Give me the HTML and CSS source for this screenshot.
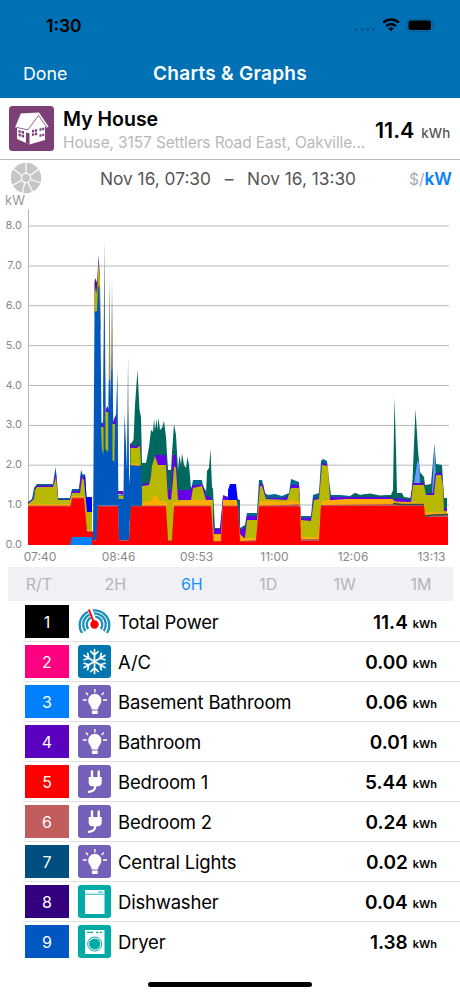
FILE: index.html
```html
<!DOCTYPE html>
<html lang="en">
<head>
<meta charset="UTF-8">
<meta name="viewport" content="width=device-width, initial-scale=1.0">
<title>Charts &amp; Graphs</title>
<link rel="stylesheet" href="styles.css">
</head>
<body>
<svg class="defs" width="0" height="0">
    <symbol id="bulb" viewBox="0 0 33 33">
        <path d="M10.200 15.400a6.600 6.600 0 1 1 13.200 0c0 3.800-3.200 5-3.400 9h-6.400c-.2-4-3.400-5.200-3.400-9z" fill="#fff"/>
        <rect x="13.800" y="25.500" width="6" height="3.500" rx="1.200" fill="#fff"/>
        <path d="M16.800 4v3.500M8 7.500l2 2.600M25.700 7.500l-2 2.600M4.800 15h4M25 15h4" stroke="#fff" stroke-width="1.400"/>
    </symbol>
    <symbol id="plug" viewBox="0 0 33 33">
        <path d="M14 6.500v8M20.700 6.500v8" stroke="#fff" stroke-width="2.400" stroke-linecap="round"/>
        <path d="M10.700 12h13v5.500q0 3.700-3.700 3.700h-5.600q-3.700 0-3.700-3.700z" fill="#fff"/>
        <path d="M17.200 20v1.500q-.3 4.800-6.400 5.300" fill="none" stroke="#fff" stroke-width="2.300" stroke-linecap="round"/>
    </symbol>
</svg>

<header class="top">
    <div class="status">
        <span class="clock">1:30</span>
        <svg width="84" height="18" viewBox="0 0 84 18">
            <g fill="#00558f">
                <circle cx="4" cy="12.500" r="1.400"/><circle cx="10" cy="12.500" r="1.400"/>
                <circle cx="15.700" cy="12.500" r="1.400"/><circle cx="21.500" cy="12.500" r="1.400"/>
            </g>
            <g fill="none" stroke="#000" stroke-width="2.400">
                <path d="M31.200 5.600a11.300 11.300 0 0 1 15.600 0"/>
                <path d="M34.200 9.100a6.800 6.800 0 0 1 9.600 0"/>
            </g>
            <path d="M36.300 11.300q2.700-2.200 5.400 0L39 14.200z"/>
            <rect x="55" y="2" width="25.500" height="12.500" rx="3.500" fill="none" stroke="#005d96"/>
            <rect x="56.500" y="3.500" width="22.500" height="9.500" rx="2.200"/>
            <path d="M82 6q2 2 0 4z" fill="#004d80"/>
        </svg>
    </div>
    <div class="nav">
        <span class="done">Done</span>
        <h1>Charts &amp; Graphs</h1>
    </div>
</header>

<section class="house">
    <svg width="45" height="45" viewBox="0 0 45 45">
        <rect width="45" height="45" rx="3.500" fill="#7d3f76"/>
        <path d="M6 21.500L11.800 7.500 30 6.500 39.500 20.500 37.800 22.300 36 20v14L20.500 38.500 8 33V21.500z" fill="#fff"/>
        <path d="M38.500 22L29.500 9.500 19 23.800 8 21.500" fill="none" stroke="#7d3f76" stroke-width=".8"/>
        <g fill="#7d3f76">
            <path d="M9.500 24l2.300.5v2.600l-2.300-.6zM12.600 24.700l2.400.5v2.700l-2.400-.6zM9.500 27.500l2.300.6v2.600l-2.300-.8zM12.600 28.300l2.400.7v2.700l-2.400-.9z"/>
            <path d="M17 26.500l3.500.8v11.300L17 37z"/>
            <path d="M23 24l2.200-.4V26l-2.200.4zM26 23.400l2.200-.4v2.500l-2.200.4zM23 27.400l2.200-.4v2.500l-2.200.5zM26 26.800l2.200-.4v2.500l-2.200.5z"/>
            <path d="M30.500 22.500l2-.4v2.400l-2 .4zM33.200 22l2-.4V24l-2 .4zM30.500 28.500l2-.5v2.400l-2 .5zM33.200 27.900l2-.5v2.400l-2 .5z"/>
        </g>
    </svg>
    <div class="house-text">
        <h2>My House</h2>
        <p>House, 3157 Settlers Road East, Oakville...</p>
    </div>
    <div class="house-total"><b>11.4</b><span>kWh</span></div>
</section>

<section class="range">
    <svg width="32" height="32" viewBox="0 0 32 32">
        <circle cx="16" cy="16" r="15.200" fill="#c6c6c6"/>
        <g stroke="#fff" stroke-width="1.200" fill="none">
            <circle cx="16" cy="16" r="4.600"/>
            <path d="M16 11.400V0M19.900 13.500L29 7M20.500 17.500L31 21M18 20.200L23 30.500M14.700 20.400L12.500 31M12 18.300L2 23.500M12 13.700L3.500 7"/>
        </g>
    </svg>
    <div class="dates"><span>Nov 16, 07:30</span><span class="dash">–</span><span>Nov 16, 13:30</span></div>
    <div class="unit">$/<b>kW</b></div>
</section>

<div class="kw">kW</div>
<svg class="chart" width="460" height="359" viewBox="0 208 460 359">
    <g class="grid">
        <path d="M28 226H449M28 266H449M28 305.700H449M28 345.600H449M28 385.500H449M28 425.400H449M28 465.200H449M28 505H449M28.500 209V545"/>
    </g>

    <!-- top of the stack -->
    <path fill="#00695f" d="M130 545V445L133.500 440 135 405 137.500 370 139.500 410 141 417 142 463H146L149 447 151 430 153 432 154 419 155 430 156.500 419 157.300 430 158.500 418 160 430 162 428 164 421 166 437 168 470H171L172 453 174 424 176 435 178 470 179.500 455 181 465 182 453 184 465 186 468 187.500 457 189 465 191 488 206 494 207 471 209 468 210.500 449 212 487 213 489 215 530V545z"/>
    <path fill="#00658f" d="M28 545V502L32 499 34 488 37 484H53L55.500 467 57 481 58 498H70L72 489H79L81 470 83 475 85 474 86.500 497H92V545zM189 545L191 490 193 480 202 480 203 486 206 491 208 496H211L214 528H220L222 510 223 495 228 497 240 500V528L245 525 247 513H257L259 480H262L265 493 268 495 275 494 282 496 289 493 291 479 299 482 300 516H311L313 495 319 493 321 461 323 459 327 461 329 480 331 495H340L350 496 355 493 360 495 368 494 380 496 392 495V545z"/>
    <path fill="#00695f" d="M350 497L355 493 360 495 370 493.500 380 495.500 391 495 393 490 394.500 397 396 450 397 493 402 493 404 497 411 498 412.500 480 415.500 409 418 450 420 472 424 477 425 485 431 484 434.500 444 436 464 442 465 444 498H447V545H350z"/>
    <path fill="#669cff" d="M414 484L417.500 460 419.500 465 420 485zM432 494L434.500 445 436 480 435 494z"/>
    <path fill="#6500e8" d="M28 545V503L34 498 35 488 37 485.500H53L56 472 58 499.500H70L72 491H79L81 474 83 478 85 477 87 510H92V545zM142 545V484L149 483 151 474 153 464 155 455H166L168 490H171L173 455H176L178 490H190L193 485H203L206 496 211 497 214 529H220L223 496 228 497 236 499 240 530 245 528 247 516H257L260 484 263 484 266 498H284L290 495 291 485H299L301 518H311L314 498H319L322 463 327 464 330 497H390L392 500 397 498 410 500 413 483H424L425 494 433 493 435 474 441 472 443 483 444 508H447V545z"/>
    <path fill="#0000ff" d="M84 475H85L86.500 497H92V515H86zM228 502V490L230 484H236L238 502z"/>
    <path fill="#b8b800" d="M28 545V504L34 499 35 490 37 487H53L56 477 58 500H70L72 493H80L82 478 84 480 87 512H92V545zM142 545V486L149 485 151 476 152 466 155 456 158 465H166L168 499 171 500 173 480 174 466 176 468 178 500H191L193 488 202 486 206 500H213V545zM244 545L247 520H257L260 486 262 486 266 499 287 500 291 488H299L301 520 311 521 314 500 319 499 322 465 328 466 330 500 411 502 413 485H424L426 495 434 495 436 475 441 475 443 485 444 511H447V545z"/>
    <path fill="#ffad00" d="M28 545V504H70L72 496H84L87 530H92V545zM142 545V503L151 501 156 494 159 501 167 502V545zM173 545V502L192 500H211L214 534H221L223 500H237L240 534 244 538 256 538 260 501 286 502 291 500 299 502 301 537H318L322 501 345 499 392 499 396 502 424 503 425 512 448 513V545z"/>
    <path fill="#b65f5f" d="M28 545V505.500H70L72 497.500H84L87 531H93V545zM93 545V539H96L98 505.500H118L119 539.500H129L131 505.500H166L168 540H172L174 505.500H211L214 541H221L223 505.500H238L240 541 256 540 259 505.500 284 505 299 504 301 539H319L321 505 390 504 424 505 425 515 448 515V545z"/>
    <path class="central" d="M393 503.500L402 504.500 424 504.500M425 516L433 515 448 514.500"/>
    <path fill="#ff0000" d="M28 545V506.500H71L72 498.500H84L87 532H93L94 541H96L98 506.500H118L119 541H129L131 506.500H166L168 541H172L174 506.500H211L213 541.500H221L223 506.500H238L240 541.500H256L259 506.500H300L301 541H319L321 506H424L425 517 448 517V545z"/>
    <path fill="#0080ff" d="M70 545L72 537H92V545z"/>

    <!-- dryer peaks -->
    <path fill="#4a168f" d="M94.500 312V282L95.500 278 97 283 98.700 255 100 280 100.500 330z"/>
    <path fill="#b8b800" d="M94.500 312V295L96 287 97 295 98.500 262 100 280 100.500 330 96 330z"/>
    <path fill="#58747c" d="M103 405L104.500 240 105.600 410zM108.500 405L109.500 277 110.700 410zM111 405L112 278 113.200 420zM127 450L128.100 355 129 490z"/>
    <path fill="#0057be" d="M93 540L94.500 312 97 311 98 288 99.300 285 100.500 330 101.500 422 103 424 104.500 300 105.500 420 107 409 108.500 409 109.500 350 110.500 400 112 350 113.200 422 116 415 117.500 370 118.300 495H123.500L124.500 413 126 445 127 470 128.100 410 129.200 485 130.500 465H141L142 505.500H130.500L129 540H119L118 505.500H98L96.500 540z"/>
    <path fill="#b59b4b" d="M109 380L109.500 283 110.100 380zM111.500 370L112 300 112.600 370z"/>
    <path fill="#5c12c8" d="M101 427L102 422 103.500 425V430zM105.500 416V410L107.500 406 108.500 408V416zM112.500 425L114 419 116 415V424zM118 494V491H123.500V495zM130 450V443L133 446 137 446 140 444 141 450z"/>
    <path fill="#b8b800" d="M101 427H103.500V455L102 449zM105.500 412H108.200V452L105.500 449zM112.500 424H115L114.300 462 112.500 460zM118.500 495.500H123.500V499H118.500zM130.500 464V448H137L140 446 141 465z"/>
    <path fill="#ffad00" d="M130.500 465V463.500H137L141 466z"/>

    <g class="y-labels">
        <text x="22" y="229">8.0</text>
        <text x="22" y="269">7.0</text>
        <text x="22" y="309">6.0</text>
        <text x="22" y="349">5.0</text>
        <text x="22" y="389">4.0</text>
        <text x="22" y="428">3.0</text>
        <text x="22" y="468">2.0</text>
        <text x="22" y="508">1.0</text>
        <text x="22" y="548">0.0</text>
    </g>
    <g class="x-labels">
        <text x="40" y="561">07:40</text>
        <text x="118.500" y="561">08:46</text>
        <text x="196.500" y="561">09:53</text>
        <text x="274.500" y="561">11:00</text>
        <text x="353" y="561">12:06</text>
        <text x="431.500" y="561">13:13</text>
    </g>
</svg>

<nav class="tabs">
    <span>R/T</span>
    <span>2H</span>
    <span class="active">6H</span>
    <span>1D</span>
    <span>1W</span>
    <span>1M</span>
</nav>

<ul class="devices">
    <li>
        <span class="num c1">1</span>
        <svg class="icon" viewBox="0 0 33 33">
            <g fill="none" stroke="#168fbd" stroke-width="2.300">
                <path d="M4 28A14.800 14.800 0 1 1 29 28"/>
                <path d="M7.200 26A11.300 11.300 0 1 1 25.800 26"/>
                <path d="M10.200 24A7.800 7.800 0 1 1 22.800 24"/>
            </g>
            <path d="M8.800 4l5-1.500 4.800 13.600-3.800 1z" fill="#fff"/>
            <circle cx="16.500" cy="19.500" r="4.200" fill="#f00"/>
            <path d="M10.800 4.500l5.700 14.500" stroke="#f00" stroke-width="2"/>
        </svg>
        <span class="name">Total Power</span><b>11.4</b><small>kWh</small>
    </li>
    <li>
        <span class="num c2">2</span>
        <svg class="icon ac" viewBox="0 0 33 33">
            <g fill="none" stroke="#fff" stroke-width="1.700" stroke-linecap="round">
                <path id="arm" d="M16.500 16.500V4.500M12.800 6.500l3.700 3.500 3.700-3.500"/>
                <use href="#arm" transform="rotate(60 16.500 16.500)"/>
                <use href="#arm" transform="rotate(120 16.500 16.500)"/>
                <use href="#arm" transform="rotate(180 16.500 16.500)"/>
                <use href="#arm" transform="rotate(240 16.500 16.500)"/>
                <use href="#arm" transform="rotate(300 16.500 16.500)"/>
            </g>
        </svg>
        <span class="name">A/C</span><b>0.00</b><small>kWh</small>
    </li>
    <li>
        <span class="num c3">3</span>
        <svg class="icon purple"><use href="#bulb"/></svg>
        <span class="name">Basement Bathroom</span><b>0.06</b><small>kWh</small>
    </li>
    <li>
        <span class="num c4">4</span>
        <svg class="icon purple"><use href="#bulb"/></svg>
        <span class="name">Bathroom</span><b>0.01</b><small>kWh</small>
    </li>
    <li>
        <span class="num c5">5</span>
        <svg class="icon purple"><use href="#plug"/></svg>
        <span class="name">Bedroom 1</span><b>5.44</b><small>kWh</small>
    </li>
    <li>
        <span class="num c6">6</span>
        <svg class="icon purple"><use href="#plug"/></svg>
        <span class="name">Bedroom 2</span><b>0.24</b><small>kWh</small>
    </li>
    <li>
        <span class="num c7">7</span>
        <svg class="icon purple"><use href="#bulb"/></svg>
        <span class="name">Central Lights</span><b>0.02</b><small>kWh</small>
    </li>
    <li>
        <span class="num c8">8</span>
        <svg class="icon aqua" viewBox="0 0 33 33">
            <path d="M7 5h19.500v24H7z" fill="#fff"/>
            <path d="M7 9.200h19.500M20 7h5" stroke="#00aaa5" stroke-width=".9"/>
        </svg>
        <span class="name">Dishwasher</span><b>0.04</b><small>kWh</small>
    </li>
    <li>
        <span class="num c9">9</span>
        <svg class="icon aqua" viewBox="0 0 33 33">
            <path d="M7 5h19.500v24H7z" fill="#fff"/>
            <path d="M9 7.300h6M18 7.300h2.500M21.500 7.300h2.500" stroke="#00aaa5" stroke-width="1.300"/>
            <circle cx="16.700" cy="19" r="7" fill="#fff" stroke="#00aaa5"/>
            <circle cx="16.700" cy="19" r="5.600" fill="#00aaa5"/>
        </svg>
        <span class="name">Dryer</span><b>1.38</b><small>kWh</small>
    </li>
</ul>

<div class="home-bar"></div>
</body>
</html>
```

FILE: styles.css
```css
body {
    font-family: Inter, "Liberation Sans", sans-serif;
    background-color: #fff;
    margin: 0;
    width: 460px;
    height: 996px;
    overflow: hidden;
}
h1, h2, p, ul {
    margin: 0;
    padding: 0;
}
svg {
    display: block;
}
.defs {
    position: absolute;
}
.top {
    background-color: #0071b5;
    height: 98px;
}
.status {
    display: flex;
    justify-content: space-between;
    align-items: flex-start;
    height: 50px;
    padding: 17px 24px 0 46px;
    box-sizing: border-box;
}
.clock {
    font-size: 17.5px;
    line-height: 18px;
    font-weight: 600;
}
.nav {
    display: grid;
    grid-template-columns: 1fr auto 1fr;
    align-items: center;
    height: 47px;
    padding: 0 23px;
    color: #fff;
}
.done {
    font-size: 17.8px;
}
h1 {
    font-size: 19px;
    font-weight: 600;
    letter-spacing: 0.25px;
}
.house {
    display: flex;
    align-items: center;
    height: 61px;
    padding: 0 9px;
    border-bottom: 1px solid #bbb;
}
.house-text {
    margin-left: 9px;
    padding-top: 3px;
    width: 312px;
    white-space: nowrap;
}
h2 {
    font-size: 19.5px;
    line-height: 24px;
    font-weight: 600;
}
.house p {
    font-size: 15.5px;
    line-height: 23px;
    letter-spacing: -0.13px;
    color: #b8b8b8;
}
.house-total {
    display: flex;
    align-items: baseline;
    gap: 7px;
    padding-top: 2px;
}
.house-total b {
    font-size: 21.5px;
    font-weight: 600;
}
.house-total span {
    font-size: 13.3px;
    font-weight: 500;
    color: #555;
}
.range {
    display: flex;
    align-items: center;
    height: 36px;
    padding: 0 8px 0 10px;
}
.dates {
    display: flex;
    justify-content: space-between;
    width: 256px;
    margin-left: 58px;
    font-size: 17.3px;
    color: #555;
    white-space: nowrap;
}
.unit {
    margin-left: auto;
    font-size: 15.5px;
    color: #aaa;
}
.unit b {
    font-size: 17.3px;
    font-weight: 600;
    color: #087fff;
}
.kw {
    height: 12px;
    padding-left: 5px;
    font-size: 13px;
    line-height: 9px;
    color: #999;
}
.grid path {
    fill: none;
    stroke: #b8b8b8;
    stroke-width: 1;
}
.central {
    fill: none;
    stroke: #304b50;
    stroke-width: 1.5;
}
.y-labels text {
    font-size: 11px;
    fill: #888;
    text-anchor: end;
}
.x-labels text {
    font-size: 12px;
    fill: #888;
    text-anchor: middle;
}
.tabs {
    display: flex;
    height: 34px;
    margin: 0 7px 1px 8px;
    padding: 0 2px 0 1px;
    justify-content: space-between;
    align-items: center;
    background-color: #f0f0f5;
    font-size: 16px;
    color: #b5b5b9;
    box-sizing: border-box;
}
.tabs span {
    width: 60px;
    text-align: center;
}
.tabs .active {
    color: #1590ff;
}
.devices {
    list-style: none;
    height: 363px;
}
.devices li {
    display: flex;
    align-items: center;
    height: 40px;
    margin-left: 23px;
    padding: 0 23px 0 2px;
    border-bottom: 1px solid #e2e2e2;
    box-sizing: border-box;
}
.devices li:last-child {
    border-bottom-color: transparent;
}
.num {
    width: 44px;
    height: 33px;
    margin-right: 9px;
    color: #fff;
    font-size: 16px;
    line-height: 34px;
    text-align: center;
}
.c1 { background-color: #000; }
.c2 { background-color: #ff0080; }
.c3 { background-color: #0080ff; }
.c4 { background-color: #5a00bf; }
.c5 { background-color: #ff0000; }
.c6 { background-color: #c15d5d; }
.c7 { background-color: #004d80; }
.c8 { background-color: #330080; }
.c9 { background-color: #0057c2; }
.icon {
    width: 33px;
    height: 33px;
    border-radius: 3px;
}
.ac { background-color: #0077b0; }
.purple { background-color: #7460b8; }
.aqua { background-color: #00aaa5; }
.name {
    flex: 1;
    margin-left: 7px;
    font-size: 18.5px;
    letter-spacing: -0.2px;
}
.devices b {
    padding-top: 1px;
    font-size: 19px;
    font-weight: 600;
}
.devices small {
    margin: 5px 0 0 5px;
    font-size: 11px;
    font-weight: 600;
}
.home-bar {
    width: 164px;
    height: 5px;
    margin: 17px auto 0;
    border-radius: 3px;
    background-color: #000;
}
```
